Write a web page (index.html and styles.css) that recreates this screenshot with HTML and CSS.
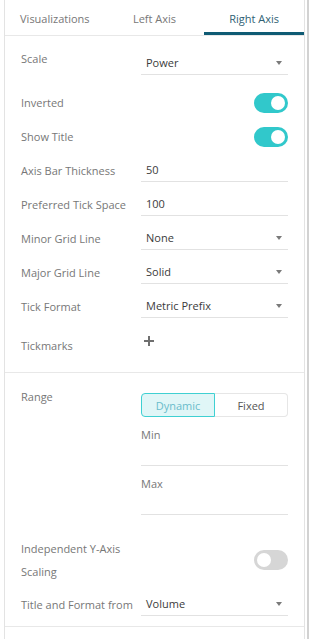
FILE: index.html
```html
<!DOCTYPE html>
<html>
<head>
<meta charset="utf-8">
<link rel="stylesheet" href="styles.css">
</head>
<body>
<div class="page">
  <div class="panel">
    <div class="tabs">
      <div class="tab">Visualizations</div>
      <div class="tab">Left Axis</div>
      <div class="tab active">Right Axis</div>
    </div>

    <div class="section s1">
      <div class="row row-scale">
        <div class="label">Scale</div>
        <div class="select"><span>Power</span><span class="caret"></span></div>
      </div>
      <div class="row">
        <div class="label">Inverted</div>
        <div class="ctrl-end"><span class="toggle on"></span></div>
      </div>
      <div class="row">
        <div class="label">Show Title</div>
        <div class="ctrl-end"><span class="toggle on"></span></div>
      </div>
      <div class="row">
        <div class="label">Axis Bar Thickness</div>
        <div class="select"><span>50</span></div>
      </div>
      <div class="row">
        <div class="label">Preferred Tick Space</div>
        <div class="select"><span>100</span></div>
      </div>
      <div class="row">
        <div class="label">Minor Grid Line</div>
        <div class="select"><span>None</span><span class="caret"></span></div>
      </div>
      <div class="row">
        <div class="label">Major Grid Line</div>
        <div class="select"><span>Solid</span><span class="caret"></span></div>
      </div>
      <div class="row">
        <div class="label">Tick Format</div>
        <div class="select"><span>Metric Prefix</span><span class="caret"></span></div>
      </div>
      <div class="row row-tick">
        <div class="label">Tickmarks</div>
        <div class="plus-wrap">
          <svg class="plus" width="10" height="10" viewBox="0 0 10 10"><path d="M5 0V10M0 5H10" stroke="#6f6f6f" stroke-width="2"/></svg>
        </div>
      </div>
    </div>

    <div class="section s2">
      <div class="row-range">
        <div class="label">Range</div>
        <div class="range-ctrl">
          <div class="seg">
            <div class="seg-btn active">Dynamic</div>
            <div class="seg-btn">Fixed</div>
          </div>
          <div class="sub-label">Min</div>
          <div class="input"></div>
          <div class="sub-label">Max</div>
          <div class="input"></div>
        </div>
      </div>
      <div class="row-indep">
        <div class="label">Independent Y-Axis Scaling</div>
        <div class="ctrl-end"><span class="toggle"></span></div>
      </div>
      <div class="row row-title">
        <div class="label">Title and Format from</div>
        <div class="select"><span>Volume</span><span class="caret"></span></div>
      </div>
    </div>

    <div class="section s3"></div>
  </div>
  <div class="edge"></div>
</div>
</body>
</html>
```

FILE: styles.css
```css
* { box-sizing: border-box; }
html, body {
  margin: 0;
  padding: 0;
  background: #ffffff;
}
body {
  font-family: "Open Sans", "Noto Sans", sans-serif;
  font-size: 11px;
  color: #3b3b3b;
}
.page {
  display: flex;
  height: 639px;
  padding-left: 4px;
  gap: 2px;
}
.panel {
  width: 301px;
  height: 100%;
  border-left: 1px solid #e3e3e3;
  border-right: 1px solid #e3e3e3;
  display: flex;
  flex-direction: column;
}
.edge {
  width: 2px;
  height: 100%;
  background: #d2d2d2;
}
.tabs {
  display: flex;
  height: 36px;
  border-bottom: 1px solid #e8e8e8;
}
.tab {
  flex: 1;
  height: 35px;
  padding-top: 11px;
  line-height: 16px;
  text-align: center;
  color: #777777;
}
.tab.active {
  color: #2f5f73;
  box-shadow: inset 0 -3px 0 #0f5b74;
}
.section {
  padding: 0 16px;
  border-bottom: 1px solid #e8e8e8;
}
.s1 { padding-top: 15px; padding-bottom: 14px; }
.s2 { padding-top: 16px; padding-bottom: 4px; }
.s3 { flex: 1; border-bottom: none; }

.row {
  display: grid;
  grid-template-columns: 120px 147px;
  height: 34px;
  align-items: start;
}
.label {
  color: #777777;
  line-height: 34px;
}
.select, .input {
  margin-top: 5px;
  height: 23px;
  line-height: 22px;
  border-bottom: 1px solid #e2e2e2;
  padding: 0 6px 0 5px;
  display: flex;
  justify-content: space-between;
  align-items: center;
  color: #3b3b3b;
}
.caret {
  width: 0;
  height: 0;
  border-left: 3.5px solid transparent;
  border-right: 3.5px solid transparent;
  border-top: 4px solid #7a7a7a;
}
.row-scale { height: 35px; }
.row-scale .label { line-height: 16px; }
.row-scale .select { margin-top: 1px; }

.ctrl-end {
  height: 34px;
  display: flex;
  justify-content: flex-end;
  align-items: center;
}
.toggle {
  width: 34px;
  height: 20px;
  border-radius: 10px;
  background: #d6d6d6;
  display: flex;
  align-items: center;
  justify-content: flex-start;
  padding: 0 3px;
}
.toggle::after {
  content: "";
  width: 14px;
  height: 14px;
  border-radius: 50%;
  background: #ffffff;
}
.toggle.on {
  background: #31c8cb;
  justify-content: flex-end;
}

.row-tick .label {
  line-height: 16px;
  margin-top: 14px;
}
.plus-wrap {
  height: 34px;
  display: flex;
  align-items: center;
  padding-left: 3px;
}

.row-range {
  display: grid;
  grid-template-columns: 120px 147px;
}
.row-range .label { line-height: 16px; }
.range-ctrl { padding-top: 4px; }
.seg {
  display: flex;
  height: 24px;
}
.seg-btn {
  flex: 1;
  display: flex;
  align-items: center;
  justify-content: center;
  border: 1px solid #e6e6e6;
  border-left: none;
  border-radius: 0 4px 4px 0;
  color: #555555;
}
.seg-btn.active {
  flex: 0 0 74px;
  border: 1px solid #3fd0d2;
  border-radius: 4px 0 0 4px;
  background: #e0f6f7;
  color: #6abccb;
}
.sub-label {
  margin-top: 10px;
  line-height: 16px;
  color: #777777;
}
.input { margin-top: 0; }

.row-indep {
  display: grid;
  grid-template-columns: 120px 147px;
  align-items: center;
  margin-top: 22px;
}
.row-indep .label {
  line-height: 23px;
}
.row-indep .ctrl-end { height: auto; }
.row-title { margin-top: 5px; }
```
